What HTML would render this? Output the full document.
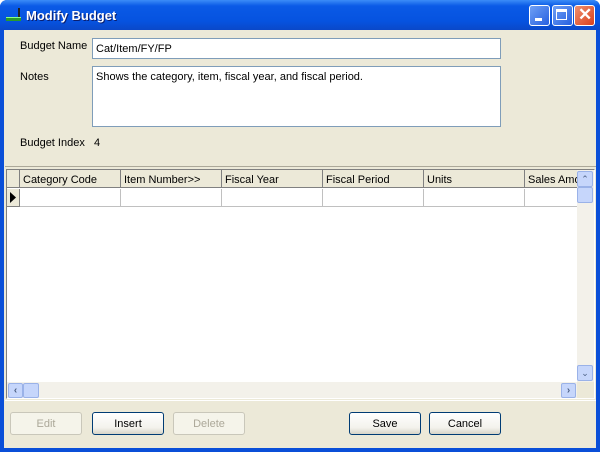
<!DOCTYPE html><html><head><style>
body{margin:0;width:600px;height:452px;overflow:hidden;font-family:"Liberation Sans",Tahoma,sans-serif;font-size:11px;}
.win{position:absolute;left:0;top:0;width:600px;height:452px;background:#0a4fd8;border-radius:7px 7px 0 0;}
.title{position:absolute;left:0;top:0;width:600px;height:30px;border-radius:7px 7px 0 0;background:linear-gradient(#3b8cf7,#0a5ae6 20%,#0653e0 70%,#0a48c8);}
.tt{position:absolute;left:26px;top:8px;color:#fff;font-weight:bold;font-size:13px;text-shadow:1px 1px #0a1e6e;}
.cl{position:absolute;left:4px;top:30px;width:592px;height:418px;background:#ece9d8;}
.a{position:absolute}
.tb{position:absolute;background:#fff;border:1px solid #7f9db9;box-sizing:border-box;padding:4px 3px;}
.btn{position:absolute;width:72px;height:23px;box-sizing:border-box;border:1px solid #003c74;border-radius:3px;background:linear-gradient(#fff,#f3f2ec 70%,#d8d5c8);text-align:center;line-height:23px;}
.dis{border-color:#c9c7ba;color:#aca899;background:#f5f4ea;}
.wb{position:absolute;top:5px;width:21px;height:21px;border:1px solid #fff;border-radius:3px;box-sizing:border-box;background:linear-gradient(135deg,#6fa0f5,#2760e0);}
.hd{position:absolute;top:0;height:18px;border-right:1px solid #808080;border-bottom:1px solid #808080;box-sizing:border-box;background:#ece9d8;padding:4px 0 0 3px;white-space:nowrap;overflow:hidden;}
.cell{position:absolute;top:19px;height:18px;border-right:1px solid #c0c0c0;border-bottom:1px solid #c0c0c0;box-sizing:border-box;background:#fff}
</style></head><body>
<div class="win"><div class="title"></div>
<svg class="a" style="left:6px;top:8px" width="16" height="14"><rect x="0" y="9" width="15" height="4" fill="#2a9a2a"/><rect x="12" y="0" width="2" height="10" fill="#222"/><rect x="0" y="9" width="15" height="1" fill="#8f8"/></svg>
<div class="tt">Modify Budget</div>
<div class="wb" style="left:529px"><div class="a" style="left:5px;top:12px;width:7px;height:3px;background:#fff"></div></div>
<div class="wb" style="left:552px"><div class="a" style="left:3px;top:3px;width:11px;height:11px;border:1px solid #fff;border-top-width:3px;box-sizing:border-box"></div></div>
<div class="wb" style="left:574px;background:linear-gradient(135deg,#f09070,#d8401c)"><div class="a" style="left:3px;top:-1px;color:#fff;font-size:17px;font-weight:bold">✕</div></div>
<div class="cl">
<div class="a" style="left:16px;top:10px">Budget Name</div>
<div class="tb" style="left:88px;top:8px;width:409px;height:21px">Cat/Item/FY/FP</div>
<div class="a" style="left:16px;top:41px">Notes</div>
<div class="tb" style="left:88px;top:36px;width:409px;height:61px">Shows the category, item, fiscal year, and fiscal period.</div>
<div class="a" style="left:16px;top:107px">Budget Index&nbsp;&nbsp; 4</div>
<div class="a" style="left:1px;top:136px;width:591px;height:235px;border-top:1px solid #aca899;border-bottom:1px solid #fff;box-sizing:border-box"></div>
<div class="a" style="left:2px;top:139px;width:589px;height:230px;background:#fff;border:1px solid #7f9db9;border-color:#808080 #fff #fff #808080;box-sizing:border-box;overflow:hidden">
<div class="a" style="left:0;top:0;width:572px;height:40px">
<div class="hd" style="left:0;width:13px"></div>
<div class="hd" style="left:13px;width:101px">Category Code</div>
<div class="hd" style="left:114px;width:101px">Item Number&gt;&gt;</div>
<div class="hd" style="left:215px;width:101px">Fiscal Year</div>
<div class="hd" style="left:316px;width:101px">Fiscal Period</div>
<div class="hd" style="left:417px;width:101px">Units</div>
<div class="hd" style="left:518px;width:60px">Sales Amo</div>
<div class="hd" style="left:0;top:19px;width:13px;height:18px;border-top:0"><svg class="a" style="left:3px;top:3px" width="6" height="11"><path d="M0 0L6 5.5 0 11z" fill="#000"/></svg></div>
<div class="cell" style="left:13px;width:101px"></div><div class="cell" style="left:114px;width:101px"></div><div class="cell" style="left:215px;width:101px"></div><div class="cell" style="left:316px;width:101px"></div><div class="cell" style="left:417px;width:101px"></div><div class="cell" style="left:518px;width:60px"></div>
</div>
<div class="a" style="left:570px;top:0;width:17px;height:212px;background:#f3f1ea"></div>
<div class="a" style="left:570px;top:1px;width:16px;height:16px;border-radius:2px;background:#c6d6fb;border:1px solid #9ab2e8;box-sizing:border-box;color:#4d6185;text-align:center;font-size:9px;line-height:14px">⌃</div>
<div class="a" style="left:570px;top:17px;width:16px;height:16px;border-radius:2px;background:#c6d6fb;border:1px solid #9ab2e8;box-sizing:border-box"></div>
<div class="a" style="left:570px;top:195px;width:16px;height:16px;border-radius:2px;background:#c6d6fb;border:1px solid #9ab2e8;box-sizing:border-box;color:#4d6185;text-align:center;font-size:9px;line-height:14px">⌄</div>
<div class="a" style="left:0;top:212px;width:570px;height:17px;background:#f3f1ea"></div>
<div class="a" style="left:1px;top:213px;width:15px;height:15px;border-radius:2px;background:#c6d6fb;border:1px solid #9ab2e8;box-sizing:border-box;color:#4d6185;font-size:10px;text-align:center;line-height:13px;font-weight:bold">‹</div>
<div class="a" style="left:16px;top:213px;width:16px;height:15px;border-radius:2px;background:#c6d6fb;border:1px solid #9ab2e8;box-sizing:border-box"></div>
<div class="a" style="left:554px;top:213px;width:15px;height:15px;border-radius:2px;background:#c6d6fb;border:1px solid #9ab2e8;box-sizing:border-box;color:#4d6185;font-size:10px;text-align:center;line-height:13px;font-weight:bold">›</div>
<div class="a" style="left:570px;top:212px;width:17px;height:17px;background:#ece9d8"></div>
</div>
<div class="btn dis" style="left:6px;top:382px">Edit</div>
<div class="btn" style="left:88px;top:382px">Insert</div>
<div class="btn dis" style="left:169px;top:382px">Delete</div>
<div class="btn" style="left:345px;top:382px">Save</div>
<div class="btn" style="left:425px;top:382px">Cancel</div>
</div></div>
</body></html>
